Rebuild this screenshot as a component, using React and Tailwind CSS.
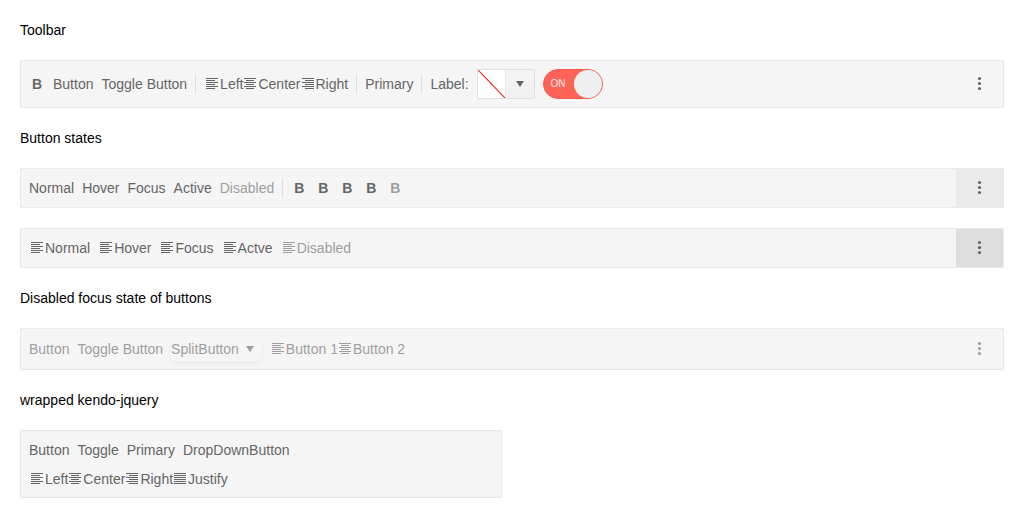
import React from "react";
import clsx from "clsx";

// Each row of an alignment glyph is [x, width]; rows are two pixels apart.
const alignRows = {
  left: [[2, 12], [2, 9], [2, 12], [2, 9], [2, 12], [2, 9]],
  center: [[2, 12], [4, 8], [2, 12], [4, 8], [2, 12], [4, 8]],
  right: [[2, 12], [5, 9], [2, 12], [5, 9], [2, 12], [5, 9]],
  justify: [[2, 12], [2, 12], [2, 12], [2, 12], [2, 12], [2, 12]],
};

function AlignIcon({ type }) {
  return (
    <svg className="size-4 shrink-0" viewBox="0 0 16 16" fill="currentColor" aria-hidden="true">
      {alignRows[type].map(([x, width], i) => (
        <rect key={i} x={x} y={2 + i * 2} width={width} height="1" />
      ))}
    </svg>
  );
}

function DownIcon() {
  return (
    <svg className="size-4 shrink-0" viewBox="0 0 16 16" fill="currentColor" aria-hidden="true">
      <path d="M4 5h8l-4 6z" />
    </svg>
  );
}

function ToolButton({ icon, children, disabled }) {
  return (
    <button type="button" disabled={disabled} className="flex items-center whitespace-nowrap disabled:opacity-60">
      {icon && <AlignIcon type={icon} />}
      {children}
    </button>
  );
}

function ButtonGroup({ children }) {
  return <div className="flex -space-x-px">{children}</div>;
}

function BoldButton({ disabled }) {
  return (
    <button type="button" disabled={disabled} className="w-4 text-center font-bold disabled:opacity-60">
      B
    </button>
  );
}

function Separator() {
  return <div className="h-5 w-px shrink-0 bg-[#dfdfdf]" />;
}

function Overflow({ disabled, className }) {
  return (
    <button
      type="button"
      aria-label="More tools"
      disabled={disabled}
      className={clsx("ml-auto flex w-[47px] shrink-0 items-center justify-center self-stretch", className)}
    >
      <svg className={clsx("h-4 w-[15px]", disabled && "opacity-60")} viewBox="0 0 15 16" fill="currentColor" aria-hidden="true">
        <circle cx="7.5" cy="2.5" r="1.6" />
        <circle cx="7.5" cy="7.5" r="1.6" />
        <circle cx="7.5" cy="12.5" r="1.6" />
      </svg>
    </button>
  );
}

function Toolbar({ label, className, children }) {
  return (
    <div
      role="toolbar"
      aria-label={label}
      className={clsx("flex items-center gap-x-2 border border-[#eaeaea] bg-[#f5f5f5] pl-2 text-[#656565]", className)}
    >
      {children}
    </div>
  );
}

function ColorPicker() {
  return (
    <button
      type="button"
      aria-label="Color"
      className="flex h-[30px] w-[58px] overflow-hidden rounded-xs border border-[#e0e0e0] bg-linear-to-b from-[#f5f5f5] to-[#f0f0f0]"
    >
      <svg className="h-7 w-[27px] bg-white" viewBox="0 0 27 28" aria-hidden="true">
        <path d="M0 0L27 28" stroke="#f02818" strokeWidth="1.2" />
      </svg>
      <span className="flex flex-1 items-center justify-center self-stretch border-l border-[#e8e8e8]">
        <DownIcon />
      </span>
    </button>
  );
}

function Switch() {
  return (
    <label className="flex h-[30px] w-[60px] cursor-pointer items-center justify-between rounded-full border border-[#f55a50] bg-[#ff6358] pl-[7px] text-[10px] leading-4 text-white/90">
      <input type="checkbox" role="switch" aria-label="Switch" defaultChecked className="sr-only" />
      <span>ON</span>
      <span className="size-7 rounded-full bg-[#f0f0f0]" />
    </label>
  );
}

export default function App() {
  return (
    <main className="flex flex-col gap-5 p-5 font-['Liberation_Sans',sans-serif] text-sm text-black">
      <p>Toolbar</p>
      <Toolbar label="Toolbar" className="h-12">
        <BoldButton />
        <ToolButton>Button</ToolButton>
        <ToolButton>Toggle Button</ToolButton>
        <Separator />
        <ButtonGroup>
          <ToolButton icon="left">Left</ToolButton>
          <ToolButton icon="center">Center</ToolButton>
          <ToolButton icon="right">Right</ToolButton>
        </ButtonGroup>
        <Separator />
        <ToolButton>Primary</ToolButton>
        <Separator />
        <span>Label:</span>
        <ColorPicker />
        <Switch />
        <Overflow />
      </Toolbar>

      <p>Button states</p>
      <Toolbar label="Text button states" className="h-10">
        <ToolButton>Normal</ToolButton>
        <ToolButton>Hover</ToolButton>
        <ToolButton>Focus</ToolButton>
        <ToolButton>Active</ToolButton>
        <ToolButton disabled>Disabled</ToolButton>
        <Separator />
        <BoldButton />
        <BoldButton />
        <BoldButton />
        <BoldButton />
        <BoldButton disabled />
        <Overflow className="bg-[#eaeaea]" />
      </Toolbar>
      <Toolbar label="Icon button states" className="h-10">
        <ToolButton icon="left">Normal</ToolButton>
        <ToolButton icon="left">Hover</ToolButton>
        <ToolButton icon="left">Focus</ToolButton>
        <ToolButton icon="left">Actve</ToolButton>
        <ToolButton icon="left" disabled>Disabled</ToolButton>
        <Overflow className="bg-[#dedede]" />
      </Toolbar>

      <p>Disabled focus state of buttons</p>
      <Toolbar label="Disabled buttons" className="h-[42px]">
        <ToolButton disabled>Button</ToolButton>
        <ToolButton disabled>Toggle Button</ToolButton>
        <div className="flex h-6 items-center rounded-sm bg-[#f5f5f5] shadow-[0_3px_4px_rgba(0,0,0,0.04)]">
          <ToolButton disabled>SplitButton</ToolButton>
          <button type="button" disabled aria-label="Open" className="flex w-[23px] items-center justify-center opacity-60">
            <DownIcon />
          </button>
        </div>
        <ButtonGroup>
          <ToolButton icon="left" disabled>Button 1</ToolButton>
          <ToolButton icon="center" disabled>Button 2</ToolButton>
        </ButtonGroup>
        <Overflow disabled />
      </Toolbar>

      <p>wrapped kendo-jquery</p>
      <div className="grid grid-cols-2 gap-5">
        <Toolbar label="Wrapped toolbar" className="flex-wrap gap-y-[9px] pt-[9px] pb-2">
          <div className="flex w-full gap-2">
            <ToolButton>Button</ToolButton>
            <ToolButton>Toggle</ToolButton>
            <ToolButton>Primary</ToolButton>
            <ToolButton>DropDownButton</ToolButton>
          </div>
          <ButtonGroup>
            <ToolButton icon="left">Left</ToolButton>
            <ToolButton icon="center">Center</ToolButton>
            <ToolButton icon="right">Right</ToolButton>
            <ToolButton icon="justify">Justify</ToolButton>
          </ButtonGroup>
        </Toolbar>
      </div>
    </main>
  );
}
